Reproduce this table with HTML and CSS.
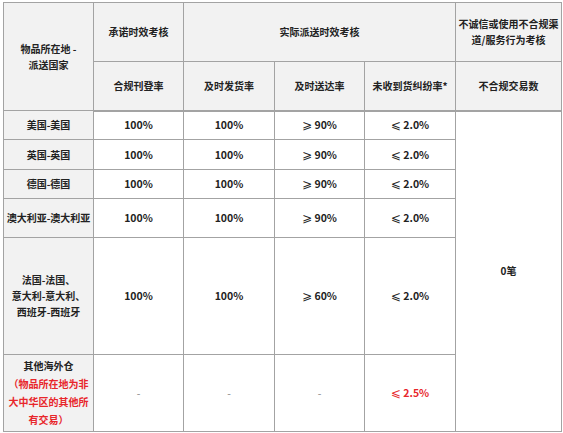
FILE: index.html
```html
<!DOCTYPE html>
<html lang="zh-CN">
<head>
<meta charset="utf-8">
<title>考核标准</title>
<link rel="stylesheet" href="styles.css">
</head>
<body>
<table class="grid">
  <colgroup>
    <col class="c1"><col class="c2"><col class="c3"><col class="c4"><col class="c5"><col class="c6">
  </colgroup>
  <thead>
    <tr class="h1">
      <th rowspan="2">物品所在地 -<br>派送国家</th>
      <th>承诺时效考核</th>
      <th colspan="3">实际派送时效考核</th>
      <th>不诚信或使用不合规渠道/服务行为考核</th>
    </tr>
    <tr class="h2">
      <th>合规刊登率</th>
      <th>及时发货率</th>
      <th>及时送达率</th>
      <th>未收到货纠纷率*</th>
      <th>不合规交易数</th>
    </tr>
  </thead>
  <tbody>
    <tr class="r1">
      <th>美国-美国</th><td>100%</td><td>100%</td><td><span class="sym">⩾</span> 90%</td><td><span class="sym">⩽</span> 2.0%</td>
      <td rowspan="6" class="count">0笔</td>
    </tr>
    <tr class="r2">
      <th>英国-英国</th><td>100%</td><td>100%</td><td><span class="sym">⩾</span> 90%</td><td><span class="sym">⩽</span> 2.0%</td>
    </tr>
    <tr class="r3">
      <th>德国-德国</th><td>100%</td><td>100%</td><td><span class="sym">⩾</span> 90%</td><td><span class="sym">⩽</span> 2.0%</td>
    </tr>
    <tr class="r4">
      <th>澳大利亚-澳大利亚</th><td>100%</td><td>100%</td><td><span class="sym">⩾</span> 90%</td><td><span class="sym">⩽</span> 2.0%</td>
    </tr>
    <tr class="r5">
      <th>法国-法国、<br>意大利-意大利、<br>西班牙-西班牙</th><td>100%</td><td>100%</td><td><span class="sym">⩾</span> 60%</td><td><span class="sym">⩽</span> 2.0%</td>
    </tr>
    <tr class="r6">
      <th class="other">其他海外仓<br><span class="red">（物品所在地为非大中华区的其他所有交易）</span></th>
      <td class="dash">-</td><td class="dash">-</td><td class="dash">-</td><td class="red"><span class="sym">⩽</span> 2.5%</td>
    </tr>
  </tbody>
</table>
</body>
</html>
```

FILE: styles.css
```css
html, body {
  margin: 0;
  padding: 0;
  background: #ffffff;
}

body {
  padding: 2px 0 0 3px;
  font-family: "Noto Sans CJK SC", "Noto Sans", sans-serif;
  font-size: 10px;
  color: #222222;
}

.grid {
  border-collapse: collapse;
  table-layout: fixed;
  width: 558px;
}

.c1 { width: 90px; }
.c2 { width: 90px; }
.c3 { width: 91px; }
.c4 { width: 90px; }
.c5 { width: 91px; }
.c6 { width: 106px; }

.grid th,
.grid td {
  border: 1px solid #a3a3a3;
  padding: 0 1px;
  text-align: center;
  vertical-align: middle;
  line-height: 16px;
  font-weight: 700;
}

.grid th {
  background: #f2f2f2;
}

.grid td {
  background: #ffffff;
  font-weight: 600;
  font-size: 10.5px;
}

.grid thead tr.h2 th {
  border-bottom: 2px solid #a3a3a3;
}

.h1 { height: 59px; }
.h2 { height: 49px; }
.r1 { height: 29px; }
.r2 { height: 30px; }
.r3 { height: 29px; }
.r4 { height: 39px; }
.r5 { height: 117px; }
.r6 { height: 77px; }

.grid .other {
  line-height: 18px;
  padding: 0 3px;
}

.sym {
  font-family: "DejaVu Sans", sans-serif;
  font-weight: 400;
  font-size: 12px;
  line-height: 1;
}

.red {
  color: #e8262b;
}

.grid td.dash {
  color: #888888;
  font-weight: 400;
}

.grid td.count {
  font-size: 10px;
}
```
